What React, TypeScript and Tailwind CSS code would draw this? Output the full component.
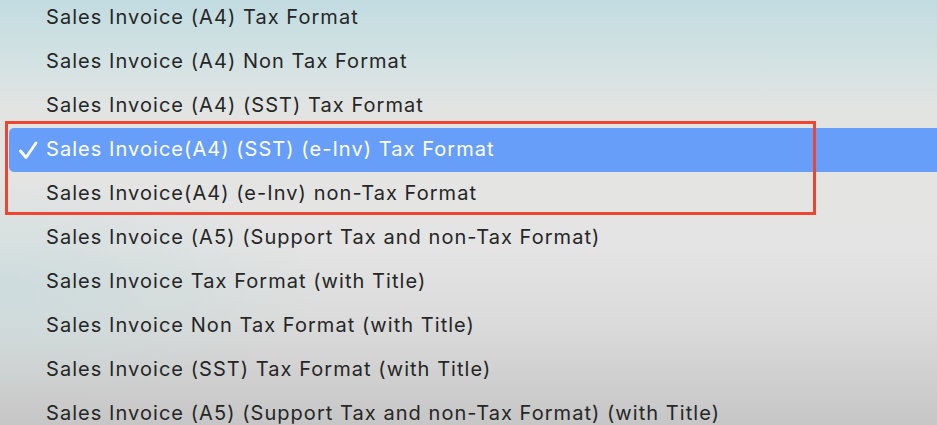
const items = [
  "Sales Invoice (A4) Tax Format",
  "Sales Invoice (A4) Non Tax Format",
  "Sales Invoice (A4) (SST) Tax Format",
  "Sales Invoice(A4) (SST) (e-Inv) Tax Format",
  "Sales Invoice(A4) (e-Inv) non-Tax Format",
  "Sales Invoice (A5) (Support Tax and non-Tax Format)",
  "Sales Invoice Tax Format (with Title)",
  "Sales Invoice Non Tax Format (with Title)",
  "Sales Invoice (SST) Tax Format (with Title)",
  "Sales Invoice (A5) (Support Tax and non-Tax Format) (with Title)",
];

const selected = 3;

export default function App() {
  return (
    <div className="relative w-[937px] h-[425px] overflow-hidden bg-[radial-gradient(ellipse_320px_110px_at_0%_68%,rgba(198,218,220,0.7),transparent),linear-gradient(to_bottom,#c2dce1_0%,#d3e2e3_14%,#e2e4e2_26%,#e4e4e3_40%,#e3e4e3_58%,#dadbda_76%,#c5c6c5_100%)] font-['Inter','Noto_Sans',sans-serif]">
      {/* menu items */}
      <div className="flex flex-col -mt-[4px]">
        {items.map((label, i) => {
          const active = i === selected;
          return (
            <div
              key={i}
              className={`relative h-[44px] ml-[9px] -mr-[10px] pl-[37px] flex items-center rounded-[5px] ${
                active ? "bg-[#679ef9] text-white" : "text-[#262626]"
              }`}
            >
              {active && (
                <svg
                  className="absolute left-[9px] top-[12px] w-[20px] h-[20px]"
                  viewBox="0 0 20 20"
                  fill="none"
                  stroke="white"
                  strokeWidth="2.8"
                  strokeLinecap="round"
                  strokeLinejoin="round"
                >
                  <path d="M2.5 11 L8 17.5 L18 3" />
                </svg>
              )}
              <span className="text-[20px] leading-none -mt-[3px] tracking-[1.05px]">{label}</span>
            </div>
          );
        })}
      </div>

      {/* annotation box */}
      <div className="absolute left-[5px] top-[121px] w-[811px] h-[94px] border-[3.5px] border-[#ee4430]" />
    </div>
  );
}
